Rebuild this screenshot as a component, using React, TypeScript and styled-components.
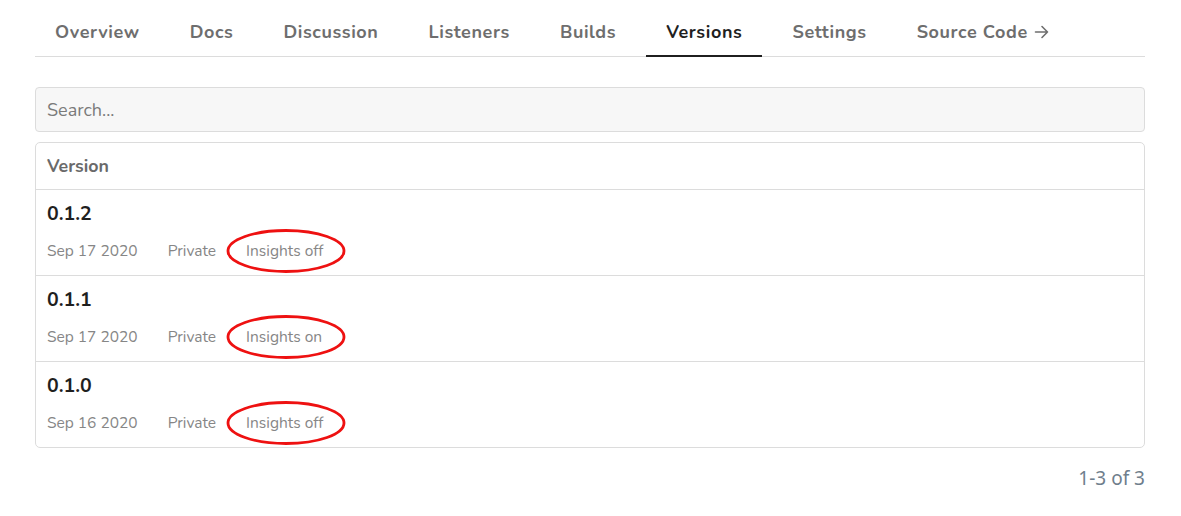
import React from "react";
import styled, { createGlobalStyle } from "styled-components";

const Global = createGlobalStyle`
  html, body { margin: 0; padding: 0; background: #fff; }
  body { font-family: "Nunito", "Lato", "Noto Sans", sans-serif; }
  * { box-sizing: border-box; }
`;

const Page = styled.div`
  width: 1181px;
  padding: 0 36px 0 35px;
`;

const Tabs = styled.nav`
  display: flex;
  gap: 10px;
  border-bottom: 1px solid #dcdcdc;
  height: 57px;
`;

const Tab = styled.a<{ $active?: boolean }>`
  display: flex;
  align-items: center;
  gap: 6px;
  padding: 9px 20px 0;
  font-size: 18px;
  font-weight: 700;
  letter-spacing: 0.6px;
  color: ${(p) => (p.$active ? "#1f1f1f" : "#6e6e6e")};
  border-bottom: 2px solid ${(p) => (p.$active ? "#1f1f1f" : "transparent")};
  margin-bottom: -1px;
  text-decoration: none;
`;

const Search = styled.input`
  display: block;
  width: 100%;
  margin-top: 30px;
  height: 45px;
  border: 1px solid #dcdcdc;
  border-radius: 4px;
  background: #f7f7f7;
  padding: 0 11px;
  font-family: inherit;
  font-size: 18px;
  color: #333;
  outline: none;
  &::placeholder { color: #7a7a7a; }
`;

const Card = styled.div`
  margin-top: 10px;
  border: 1px solid #dcdcdc;
  border-radius: 5px;
`;

const HeaderRow = styled.div`
  height: 47px;
  display: flex;
  align-items: center;
  padding: 0 11px;
  font-size: 17.8px;
  font-weight: 700;
  color: #6a6a6a;
  border-bottom: 1px solid #dcdcdc;
`;

const Row = styled.div<{ $last?: boolean }>`
  height: ${(p) => (p.$last ? "85px" : "86px")};
  padding: 10px 11px 0;
  border-bottom: ${(p) => (p.$last ? "none" : "1px solid #dcdcdc")};
`;

const VersionName = styled.div`
  font-size: 19.5px;
  font-weight: 700;
  color: #1f1f1f;
  line-height: 28px;
`;

const Meta = styled.div`
  margin-top: 13px;
  display: flex;
  gap: 30px;
  font-size: 15.5px;
  color: #868686;
  line-height: 20px;
`;

const Circled = styled.span`
  position: relative;
`;

const Ring = styled.svg`
  position: absolute;
  left: -20px;
  top: -13px;
  pointer-events: none;
`;

const Footer = styled.div`
  display: flex;
  justify-content: flex-end;
  margin-top: 18px;
  font-family: "Noto Sans", "Open Sans", sans-serif;
  font-size: 19px;
  line-height: 24px;
  color: #6f7e8c;
`;

const versions = [
  { v: "0.1.2", date: "Sep 17 2020", insights: "Insights off" },
  { v: "0.1.1", date: "Sep 17 2020", insights: "Insights on" },
  { v: "0.1.0", date: "Sep 16 2020", insights: "Insights off" },
];

const tabs = ["Overview", "Docs", "Discussion", "Listeners", "Builds", "Versions", "Settings"];

export default function App() {
  return (
    <Page>
      <Global />
      <Tabs>
        {tabs.map((t) => (
          <Tab key={t} $active={t === "Versions"}>{t}</Tab>
        ))}
        <Tab>
          Source Code
          <svg width="15" height="14" viewBox="0 0 15 14" fill="none" stroke="#6e6e6e" strokeWidth="1.6" strokeLinecap="round" strokeLinejoin="round">
            <path d="M1.5 7h12M8 1.5 13.5 7 8 12.5" />
          </svg>
        </Tab>
      </Tabs>
      <Search placeholder="Search..." />
      <Card>
        <HeaderRow>Version</HeaderRow>
        {versions.map((r, i) => (
          <Row key={r.v} $last={i === versions.length - 1}>
            <VersionName>{r.v}</VersionName>
            <Meta>
              <span>{r.date}</span>
              <span>Private</span>
              <Circled>
                {r.insights}
                <Ring width="122" height="46" viewBox="0 0 122 46">
                  <ellipse cx="60" cy="23" rx="58" ry="20.5" fill="none" stroke="#ee1111" strokeWidth="2.8" />
                </Ring>
              </Circled>
            </Meta>
          </Row>
        ))}
      </Card>
      <Footer>1-3 of 3</Footer>
    </Page>
  );
}
